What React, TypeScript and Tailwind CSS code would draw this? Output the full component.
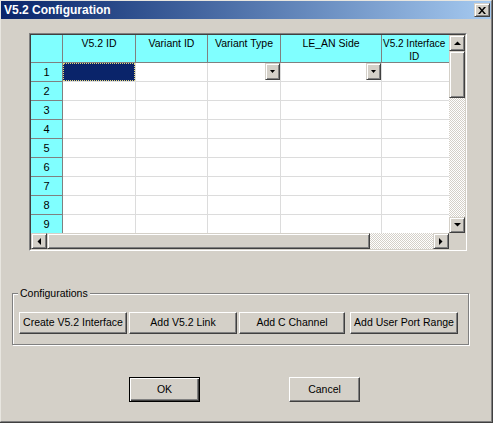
import React from "react";

const font = "font-['Liberation_Sans',Arial,sans-serif]";

const COLS = [
  { label: "V5.2 ID", w: "w-[73px]" },
  { label: "Variant ID", w: "w-[72px]" },
  { label: "Variant Type", w: "w-[73px]" },
  { label: "LE_AN Side", w: "w-[101px]" },
  { label: "V5.2 Interface ID", w: "w-[70px]" },
];

// row 10 is only a sliver under the scrollbar, so it gets no label
const ROWS = [1, 2, 3, 4, 5, 6, 7, 8, 9, 10];

const bevel =
  "border border-t-[#d4d0c8] border-l-[#d4d0c8] border-r-[#404040] border-b-[#404040] shadow-[inset_1px_1px_0_#ffffff,inset_-1px_-1px_0_#808080] bg-[#d4d0c8]";

const checker =
  "bg-[repeating-conic-gradient(#d4d0c8_0%_25%,#ffffff_0%_50%)] bg-size-[2px_2px]";

const Arrow = ({ dir }: { dir: "up" | "down" | "left" | "right" }) => {
  const pts = {
    up: "0,4 7,4 3.5,0.5",
    down: "0,0 7,0 3.5,3.5",
    left: "4,0 4,7 0.5,3.5",
    right: "0,0 0,7 3.5,3.5",
  }[dir];
  const vertical = dir === "up" || dir === "down";
  return (
    <svg width={vertical ? 7 : 4} height={vertical ? 4 : 7} viewBox={vertical ? "0 0 7 4" : "0 0 4 7"}>
      <polygon points={pts} fill="#000" />
    </svg>
  );
};

const ScrollButton = ({ dir }: { dir: "up" | "down" | "left" | "right" }) => (
  <div className={`w-[16px] h-[16px] shrink-0 flex items-center justify-center ${bevel}`}>
    <Arrow dir={dir} />
  </div>
);

const DropButton = () => (
  <div className={`w-[15px] h-[17px] flex items-center justify-center ${bevel}`}>
    <svg width="5" height="3" viewBox="0 0 5 3">
      <polygon points="0,0 5,0 2.5,3" fill="#000" />
    </svg>
  </div>
);

const Button = ({ label, w = "w-[108px]" }: { label: string; w?: string }) => (
  <button
    className={`${w} h-[22px] bg-[#d4d0c8] text-[10.5px] text-black border border-t-white border-l-white border-r-[#404040] border-b-[#404040] shadow-[inset_-1px_-1px_0_#808080] flex items-center justify-center`}
  >
    {label}
  </button>
);

const Grid = () => (
  <div className="ml-[28px] mt-[14px] w-[438px] h-[218px] border border-t-[#808080] border-l-[#808080] border-r-white border-b-white">
    <div className="w-full h-full border border-t-[#404040] border-l-[#404040] border-r-[#d4d0c8] border-b-[#d4d0c8] flex flex-col bg-white">
      <div className="flex flex-1 min-h-0">
        <div className="flex-1 overflow-hidden">
          <div className="flex">
            <div className="w-[32px] h-[28px] shrink-0 bg-[#80ffff] border-r border-b border-[#808080]" />
            {COLS.map((c) =>
              c.label === "V5.2 Interface ID" ? (
                <div
                  key={c.label}
                  className={`${c.w} h-[28px] shrink-0 bg-[#80ffff] border-r border-b border-[#808080] pl-[1px] pt-[2px] text-[10px] leading-[13px] text-black whitespace-nowrap`}
                >
                  <div className="w-fit text-center">
                    V5.2 Interface
                    <br />
                    ID
                  </div>
                </div>
              ) : (
                <div
                  key={c.label}
                  className={`${c.w} h-[28px] shrink-0 bg-[#80ffff] border-r border-b border-[#808080] text-center leading-[13px] pt-[2px] text-[10.5px] text-black whitespace-nowrap`}
                >
                  {c.label}
                </div>
              )
            )}
          </div>
          {ROWS.map((r) => (
            <div key={r} className="flex">
              <div className="w-[32px] h-[19px] shrink-0 bg-[#80ffff] border-r border-b border-[#808080] flex items-center justify-center text-[11px] text-black">
                {r < 10 ? r : null}
              </div>
              {COLS.map((c, i) => (
                <div
                  key={c.label}
                  className={`${c.w} h-[19px] shrink-0 border-r border-b border-[#dcdcdc] flex justify-end items-start`}
                >
                  {r === 1 && i === 0 && (
                    <div className="w-full h-full bg-[#0a246a] border border-dotted border-[#e8d878]" />
                  )}
                  {r === 1 && (i === 2 || i === 3) && <DropButton />}
                </div>
              ))}
            </div>
          ))}
        </div>
        <div className="w-[16px] flex flex-col shrink-0">
          <ScrollButton dir="up" />
          <div className={`h-[47px] ${bevel}`} />
          <div className={`flex-1 ${checker}`} />
          <ScrollButton dir="down" />
        </div>
      </div>
      <div className="flex h-[16px] shrink-0">
        <ScrollButton dir="left" />
        <div className={`w-[323px] ${bevel}`} />
        <div className={`flex-1 ${checker}`} />
        <ScrollButton dir="right" />
        <div className="w-[16px] bg-[#d4d0c8]" />
      </div>
    </div>
  </div>
);

export default function App() {
  return (
    <div className={`w-[493px] h-[423px] border-r border-b border-[#404040] ${font}`}>
      <div className="w-full h-full bg-[#d4d0c8] border border-t-[#e8e6e0] border-l-[#e8e6e0] border-r-[#808080] border-b-[#808080] flex flex-col">
        <div className="h-[18px] shrink-0 bg-gradient-to-r from-[#0a246a] to-[#a6caf0] flex items-center justify-between pl-[3px] pr-[1px]">
          <span className="text-white font-bold text-[12px] leading-none">V5.2 Configuration</span>
          <div className={`w-[16px] h-[14px] flex items-center justify-center ${bevel}`}>
            <svg width="8" height="7" viewBox="0 0 8 7">
              <path d="M0 0h2l2 2.5L6 0h2L5 3.5 8 7H6L4 4.5 2 7H0l3-3.5z" fill="#000" />
            </svg>
          </div>
        </div>

        <Grid />

        <div className="relative ml-[11px] mt-[42px] w-[457px] h-[52px] border border-[#808080] shadow-[inset_1px_1px_0_#ffffff,1px_1px_0_#ffffff]">
          <span className="absolute left-[5px] top-[-8px] px-[2px] bg-[#d4d0c8] text-[10.5px] leading-[14px] text-black">
            Configurations
          </span>
          <div className="flex gap-[2px] pl-[6px] pt-[18px]">
            <Button label="Create V5.2 Interface" />
            <Button label="Add V5.2 Link" />
            <Button label="Add C Channel" w="w-[106px]" />
            <div className="w-[1px]" />
            <Button label="Add User Port Range" />
          </div>
        </div>

        <div className="flex mt-[32px] ml-[128px] gap-[89px]">
          <button className="w-[71px] h-[25px] bg-[#d4d0c8] text-[10.5px] text-black border border-black shadow-[inset_1px_1px_0_#ffffff,inset_-1px_-1px_0_#404040,inset_-2px_-2px_0_#808080]">
            OK
          </button>
          <button className="w-[71px] h-[25px] bg-[#d4d0c8] text-[10.5px] text-black border border-t-white border-l-white border-r-[#404040] border-b-[#404040] shadow-[inset_-1px_-1px_0_#808080]">
            Cancel
          </button>
        </div>
      </div>
    </div>
  );
}
